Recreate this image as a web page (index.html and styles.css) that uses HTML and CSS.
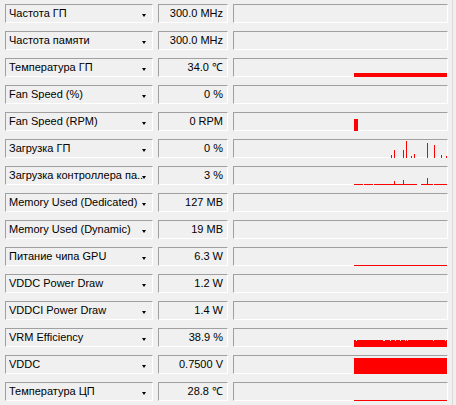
FILE: index.html
```html
<!DOCTYPE html>
<html>
<head>
<meta charset="utf-8">
<link rel="stylesheet" href="styles.css">
</head>
<body>
<div class="window">
  <div class="sensors">
    <div class="row">
      <div class="label"><span class="name">Частота ГП</span><span class="arrow"></span></div>
      <div class="value">300.0 MHz</div>
      <div class="graph"></div>
    </div>
    <div class="row">
      <div class="label"><span class="name">Частота памяти</span><span class="arrow"></span></div>
      <div class="value">300.0 MHz</div>
      <div class="graph"></div>
    </div>
    <div class="row">
      <div class="label"><span class="name">Температура ГП</span><span class="arrow"></span></div>
      <div class="value">34.0 ℃</div>
      <div class="graph"><svg class="plot" viewBox="0 0 213 18" width="213" height="18"><rect x="120" y="14" width="93" height="4" fill="#ff0000"/></svg></div>
    </div>
    <div class="row">
      <div class="label"><span class="name">Fan Speed (%)</span><span class="arrow"></span></div>
      <div class="value">0 %</div>
      <div class="graph"></div>
    </div>
    <div class="row">
      <div class="label"><span class="name">Fan Speed (RPM)</span><span class="arrow"></span></div>
      <div class="value">0 RPM</div>
      <div class="graph"><svg class="plot" viewBox="0 0 213 18" width="213" height="18"><rect x="120" y="6" width="4" height="12" fill="#ff0000"/></svg></div>
    </div>
    <div class="row">
      <div class="label"><span class="name">Загрузка ГП</span><span class="arrow"></span></div>
      <div class="value">0 %</div>
      <div class="graph"><svg class="plot" viewBox="0 0 213 18" width="213" height="18" fill="#ff0000">
        <rect x="157" y="15" width="1" height="3"/>
        <rect x="160" y="10" width="1" height="8"/>
        <rect x="169" y="10" width="1" height="8"/>
        <rect x="172" y="1" width="1" height="17"/>
        <rect x="177" y="16" width="1" height="2"/>
        <rect x="180" y="14" width="1" height="4"/>
        <rect x="193" y="3" width="1" height="15"/>
        <rect x="200" y="5" width="1" height="13"/>
        <rect x="207" y="15" width="1" height="3"/>
        <rect x="212" y="16" width="1" height="2"/>
      </svg></div>
    </div>
    <div class="row">
      <div class="label"><span class="name">Загрузка контроллера па..</span><span class="arrow"></span></div>
      <div class="value">3 %</div>
      <div class="graph"><svg class="plot" viewBox="0 0 213 18" width="213" height="18" fill="#ff0000">
        <rect x="120" y="17" width="9" height="1"/>
        <rect x="130" y="17" width="9" height="1"/>
        <rect x="140" y="17" width="43" height="1"/>
        <rect x="187" y="17" width="12" height="1"/>
        <rect x="200" y="17" width="13" height="1"/>
        <rect x="160" y="14" width="1" height="4"/>
        <rect x="169" y="13" width="1" height="5"/>
        <rect x="193" y="11" width="1" height="7"/>
      </svg></div>
    </div>
    <div class="row">
      <div class="label"><span class="name">Memory Used (Dedicated)</span><span class="arrow"></span></div>
      <div class="value">127 MB</div>
      <div class="graph"></div>
    </div>
    <div class="row">
      <div class="label"><span class="name">Memory Used (Dynamic)</span><span class="arrow"></span></div>
      <div class="value">19 MB</div>
      <div class="graph"></div>
    </div>
    <div class="row">
      <div class="label"><span class="name">Питание чипа GPU</span><span class="arrow"></span></div>
      <div class="value">6.3 W</div>
      <div class="graph"><svg class="plot" viewBox="0 0 213 18" width="213" height="18"><rect x="120" y="17" width="93" height="1" fill="#ff0000"/></svg></div>
    </div>
    <div class="row">
      <div class="label"><span class="name">VDDC Power Draw</span><span class="arrow"></span></div>
      <div class="value">1.2 W</div>
      <div class="graph"></div>
    </div>
    <div class="row">
      <div class="label"><span class="name">VDDCI Power Draw</span><span class="arrow"></span></div>
      <div class="value">1.4 W</div>
      <div class="graph"></div>
    </div>
    <div class="row">
      <div class="label"><span class="name">VRM Efficiency</span><span class="arrow"></span></div>
      <div class="value">38.9 %</div>
      <div class="graph"><svg class="plot" viewBox="0 0 213 18" width="213" height="18">
        <rect x="120" y="11" width="93" height="7" fill="#ff0000"/>
        <g fill="#f0f0f0">
          <rect x="122" y="11" width="1" height="1"/>
          <rect x="149" y="11" width="2" height="1"/>
          <rect x="156" y="11" width="1" height="1"/>
          <rect x="161" y="11" width="1" height="1"/>
          <rect x="166" y="11" width="1" height="1"/>
          <rect x="171" y="11" width="1" height="1"/>
          <rect x="173" y="11" width="1" height="1"/>
          <rect x="199" y="11" width="1" height="1"/>
          <rect x="211" y="11" width="1" height="1"/>
        </g>
      </svg></div>
    </div>
    <div class="row">
      <div class="label"><span class="name">VDDC</span><span class="arrow"></span></div>
      <div class="value">0.7500 V</div>
      <div class="graph"><svg class="plot" viewBox="0 0 213 18" width="213" height="18"><rect x="120" y="2" width="93" height="16" fill="#ff0000"/></svg></div>
    </div>
    <div class="row">
      <div class="label"><span class="name">Температура ЦП</span><span class="arrow"></span></div>
      <div class="value">28.8 ℃</div>
      <div class="graph"><svg class="plot" viewBox="0 0 213 18" width="213" height="18"><rect x="120" y="17" width="93" height="1" fill="#ff0000"/></svg></div>
    </div>
  </div>
  <div class="edge"></div>
</div>
</body>
</html>
```

FILE: styles.css
```css
html, body {
  margin: 0;
  padding: 0;
  background: #f0f0f0;
}

body {
  font-family: "Liberation Sans", Arial, sans-serif;
  font-size: 11px;
  color: #000;
}

.window {
  display: flex;
  width: 456px;
  height: 405px;
  overflow: hidden;
}

.sensors {
  width: 452px;
  padding: 4px 0 0 5px;
  box-sizing: border-box;
  display: flex;
  flex-direction: column;
  gap: 8px;
}

.edge {
  width: 3px;
  border-left: 1px solid #dadada;
  background: #f0f0f0;
}

.row {
  display: grid;
  grid-template-columns: 148px 70px 215px;
  column-gap: 5px;
  height: 19px;
}

.label, .value, .graph {
  box-sizing: border-box;
  height: 19px;
  border-top: 1px solid #a0a0a0;
  border-left: 1px solid #a0a0a0;
  border-bottom: 1px solid #ffffff;
  border-right: 1px solid #ffffff;
  background: #f0f0f0;
  line-height: 17px;
}

.label {
  position: relative;
  padding-left: 3px;
  overflow: hidden;
}

.name {
  display: block;
  white-space: nowrap;
  overflow: hidden;
  width: 136px;
}

.arrow {
  position: absolute;
  right: 6px;
  top: 9px;
  width: 0;
  height: 0;
  border-left: 2.5px solid transparent;
  border-right: 2.5px solid transparent;
  border-top: 3px solid #000;
}

.value {
  text-align: right;
  padding-right: 4px;
  white-space: nowrap;
}

.graph {
  position: relative;
}

.plot {
  position: absolute;
  left: 0;
  bottom: -1px;
  display: block;
}
```
